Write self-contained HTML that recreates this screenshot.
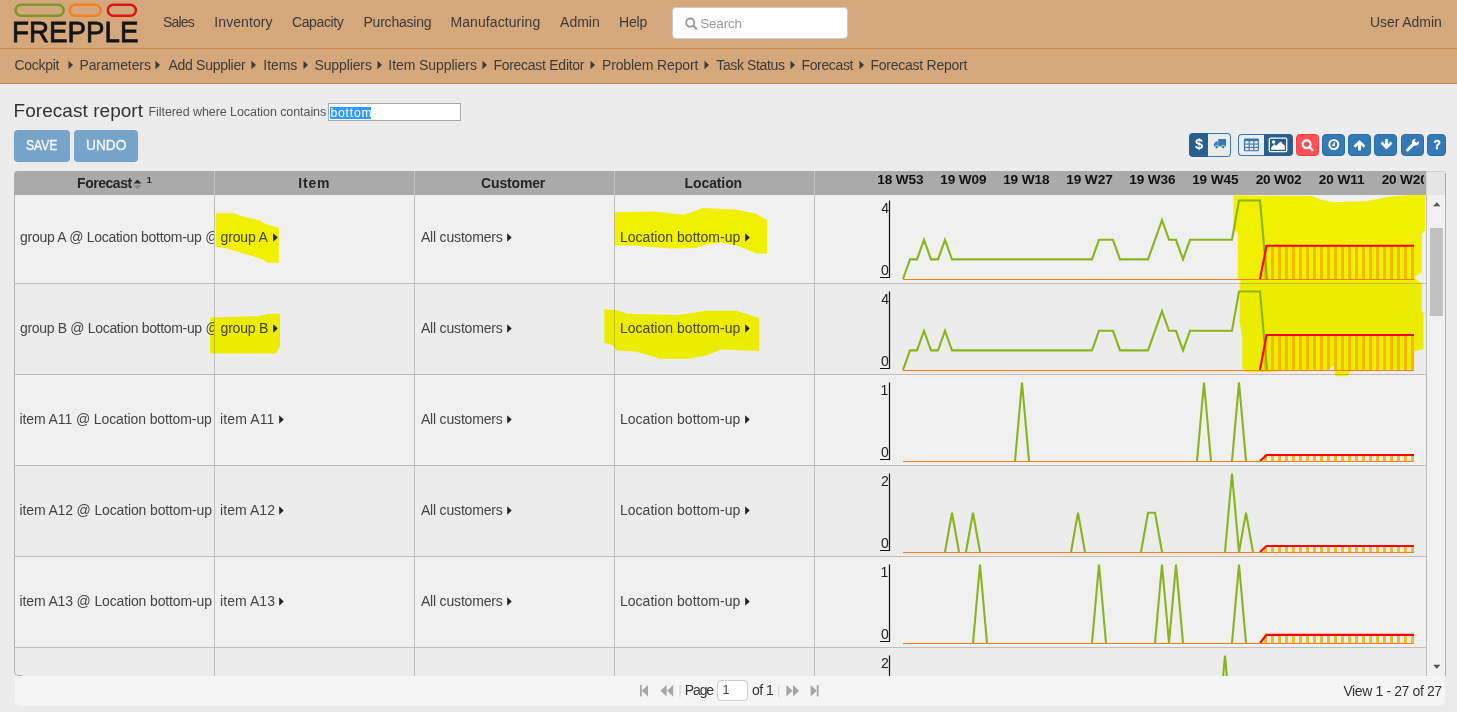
<!DOCTYPE html><html lang="en"><head><meta charset="utf-8"><title>Forecast report - frePPLe</title><style>
*{box-sizing:border-box}
html,body{margin:0;padding:0}
body{width:1457px;height:712px;overflow:hidden;position:relative;background:#ececec;font-family:"Liberation Sans", sans-serif;}
.abs{position:absolute}
.t{position:absolute;white-space:pre;line-height:1;margin:0;padding:0}
#nav{left:0;top:0;width:1457px;height:49px;background:#d5a77d;border-bottom:1px solid #c6864c}
#crumbs{left:0;top:49px;width:1457px;height:35px;background:#d5a77d;border-bottom:1px solid #c6864c}
#search{left:672px;top:7px;width:176px;height:32px;background:#fff;border:1px solid #ccc;border-radius:4px}
#filter{left:328px;top:103px;width:133px;height:18px;background:#fff;border:1px solid #a9a9a9}
#sel{left:330px;top:107px;width:41px;height:12px;background:#3399ff}
.btn{position:absolute;border-radius:4px}
#grid{left:14px;top:171px;width:1432px;height:505px;overflow:hidden;border-radius:4px 4px 0 4px}
#ghead{left:0;top:0;width:1412px;height:24px;background:#aaaaaa}
#gheadr{left:1412px;top:0;width:20px;height:24px;background:#e5e5e5;border-left:1px solid #d4d4d4;border-right:1px solid #a8a8a8;border-top:1px solid #d0d0d0}
#gbody{left:0;top:24px;width:1432px;height:481px;overflow:hidden}
.row{position:absolute;left:0;width:1412px;height:91px;border-bottom:1px solid #bebebe}
.vl{position:absolute;top:0;width:1px;background:#bebebe}
#pager{left:15px;top:676px;width:1430px;height:30px;background:#f5f5f5;border-radius:0 0 6px 6px}
#pin{left:717px;top:680px;width:31px;height:21px;background:#fff;border:1px solid #ccc;border-radius:4px}
#hl{left:0;top:0;mix-blend-mode:multiply;pointer-events:none}
</style></head><body>
<div id="nav" class="abs"></div><div id="crumbs" class="abs"></div>
<svg class="abs" style="left:0;top:0" width="160" height="48" viewBox="0 0 160 48"><rect x="15.55" y="4.7" width="48.05" height="11.1" rx="5.55" fill="none" stroke="#80962a" stroke-width="2.5"/><rect x="69.8" y="4.7" width="30.9" height="11.1" rx="5.55" fill="none" stroke="#f5821f" stroke-width="2.5"/><rect x="107.8" y="4.7" width="28.1" height="11.1" rx="5.55" fill="none" stroke="#dc1512" stroke-width="2.5"/></svg>
<div id="search" class="abs"></div>
<svg class="abs" style="left:684px;top:16px" width="14" height="15" viewBox="0 0 14 15"><circle cx="6.2" cy="6.6" r="4.1" fill="none" stroke="#999" stroke-width="1.9"/><path d="M9.4 9.8 L12.1 12.6" stroke="#999" stroke-width="2.2" stroke-linecap="round"/></svg>
<svg class="abs" style="left:67.5px;top:60.4px" width="6" height="10" viewBox="0 0 6 10"><path d="M0.5 0.8 L5 5 L0.5 9.2Z" fill="#3e3a36"/></svg>
<svg class="abs" style="left:154.5px;top:60.4px" width="6" height="10" viewBox="0 0 6 10"><path d="M0.5 0.8 L5 5 L0.5 9.2Z" fill="#3e3a36"/></svg>
<svg class="abs" style="left:250.5px;top:60.4px" width="6" height="10" viewBox="0 0 6 10"><path d="M0.5 0.8 L5 5 L0.5 9.2Z" fill="#3e3a36"/></svg>
<svg class="abs" style="left:302.5px;top:60.4px" width="6" height="10" viewBox="0 0 6 10"><path d="M0.5 0.8 L5 5 L0.5 9.2Z" fill="#3e3a36"/></svg>
<svg class="abs" style="left:376.5px;top:60.4px" width="6" height="10" viewBox="0 0 6 10"><path d="M0.5 0.8 L5 5 L0.5 9.2Z" fill="#3e3a36"/></svg>
<svg class="abs" style="left:481.5px;top:60.4px" width="6" height="10" viewBox="0 0 6 10"><path d="M0.5 0.8 L5 5 L0.5 9.2Z" fill="#3e3a36"/></svg>
<svg class="abs" style="left:589.5px;top:60.4px" width="6" height="10" viewBox="0 0 6 10"><path d="M0.5 0.8 L5 5 L0.5 9.2Z" fill="#3e3a36"/></svg>
<svg class="abs" style="left:703.5px;top:60.4px" width="6" height="10" viewBox="0 0 6 10"><path d="M0.5 0.8 L5 5 L0.5 9.2Z" fill="#3e3a36"/></svg>
<svg class="abs" style="left:789.5px;top:60.4px" width="6" height="10" viewBox="0 0 6 10"><path d="M0.5 0.8 L5 5 L0.5 9.2Z" fill="#3e3a36"/></svg>
<svg class="abs" style="left:858.5px;top:60.4px" width="6" height="10" viewBox="0 0 6 10"><path d="M0.5 0.8 L5 5 L0.5 9.2Z" fill="#3e3a36"/></svg>
<div id="filter" class="abs"></div><div id="sel" class="abs"></div>
<div class="btn" style="left:14px;top:130px;width:56px;height:32px;background:#76a3c9"></div>
<div class="btn" style="left:74px;top:130px;width:64px;height:32px;background:#76a3c9"></div>
<div id="toolbar">
<div class="abs" style="left:1189px;top:133px;width:19px;height:24px;background:#285f8f;border-radius:4px 0 0 4px"></div>
<div class="abs" style="left:1208px;top:133px;width:23px;height:24px;background:#ececec;border:1px solid #337ab7;border-left:0;border-radius:0 4px 4px 0"></div>
<span class="t" style="left:1195px;top:137.2px;font-size:14.5px;font-weight:700;color:#fff">$</span>
<svg class="abs" style="left:1213px;top:138px" width="14" height="12" viewBox="0 0 14 12"><path d="M5.2 1 H13 V8.4 H5.2Z" fill="#337ab7"/><path d="M4.8 3.6 H2.9 L0.9 5.9 V8.4 H4.8Z" fill="#337ab7"/><circle cx="3.6" cy="9" r="1.7" fill="#337ab7" stroke="#ececec" stroke-width="0.7"/><circle cx="10.2" cy="9" r="1.7" fill="#337ab7" stroke="#ececec" stroke-width="0.7"/></svg>
<div class="abs" style="left:1238px;top:134px;width:27px;height:22px;background:#ececec;border:1px solid #337ab7;border-right:0;border-radius:4px 0 0 4px"></div>
<div class="abs" style="left:1264px;top:134px;width:29px;height:22px;background:#285f8f;border-radius:0 4px 4px 0"></div>
<svg class="abs" style="left:1243px;top:138px" width="17" height="14" viewBox="0 0 17 14"><rect x="0.9" y="0.6" width="15" height="12.6" rx="1.2" fill="#3d78b0"/><g fill="#ececec"><rect x="2.2" y="3.2" width="3.4" height="2.3"/><rect x="6.8" y="3.2" width="3.4" height="2.3"/><rect x="11.4" y="3.2" width="3.4" height="2.3"/><rect x="2.2" y="6.6" width="3.4" height="2.3"/><rect x="6.8" y="6.6" width="3.4" height="2.3"/><rect x="11.4" y="6.6" width="3.4" height="2.3"/><rect x="2.2" y="10" width="3.4" height="2.2"/><rect x="6.8" y="10" width="3.4" height="2.2"/><rect x="11.4" y="10" width="3.4" height="2.2"/></g></svg>
<svg class="abs" style="left:1268px;top:137px" width="20" height="16" viewBox="0 0 20 16"><rect x="1.3" y="1.1" width="17.4" height="13.6" rx="1.2" fill="none" stroke="#fff" stroke-width="1.3"/><circle cx="5.6" cy="5" r="1.7" fill="#fff"/><path d="M3.2 12.8 V10.2 L6.4 7.2 L8 8.8 L12.4 4.4 L16.8 8.8 V12.8Z" fill="#fff"/></svg>
<div class="abs" style="left:1296px;top:134px;width:23px;height:22px;background:#fd5257;border:1px solid #fa3e44;border-radius:4px"></div>
<svg class="abs" style="left:1300px;top:138px" width="16" height="16" viewBox="0 0 16 16"><circle cx="6.6" cy="6.3" r="3.85" fill="none" stroke="#fff" stroke-width="2.3"/><path d="M9.6 9.3 L12.3 12" stroke="#fff" stroke-width="2.2" stroke-linecap="round"/></svg>
<div class="abs" style="left:1322px;top:134px;width:23px;height:22px;background:#337ab7;border:1px solid #2e6da4;border-radius:4px"></div>
<svg class="abs" style="left:1326px;top:138px" width="16" height="16" viewBox="0 0 16 16"><circle cx="7.8" cy="6.5" r="4.45" fill="none" stroke="#fff" stroke-width="2.1"/><path d="M8.3 4.2 V7.3 H6.2" fill="none" stroke="#fff" stroke-width="1.4"/></svg>
<div class="abs" style="left:1348px;top:134px;width:23px;height:22px;background:#337ab7;border:1px solid #2e6da4;border-radius:4px"></div>
<svg class="abs" style="left:1353px;top:138.6px" width="14" height="14" viewBox="0 0 14 14"><path d="M6.5 0.9 L12.4 6.8 L10.5 8.7 L7.9 6.1 V11.4 H5.1 V6.1 L2.5 8.7 L0.6 6.8Z" fill="#fff"/></svg>
<div class="abs" style="left:1374px;top:134px;width:23px;height:22px;background:#337ab7;border:1px solid #2e6da4;border-radius:4px"></div>
<svg class="abs" style="left:1379.5px;top:138.4px" width="14" height="14" viewBox="0 0 14 14"><path d="M6.5 11.4 L12.4 5.5 L10.5 3.6 L7.9 6.2 V0.9 H5.1 V6.2 L2.5 3.6 L0.6 5.5Z" fill="#fff"/></svg>
<div class="abs" style="left:1401px;top:134px;width:23px;height:22px;background:#337ab7;border:1px solid #2e6da4;border-radius:4px"></div>
<svg class="abs" style="left:1405px;top:138px" width="16" height="14" viewBox="0 0 16 14"><path d="M2.6 12 L9 5.6" stroke="#fff" stroke-width="2.9" stroke-linecap="round"/><path d="M13.9 3.3 A3.6 3.6 0 1 1 10.9 0.7 L9.5 2.9 L11.4 4.7 Z" fill="#fff"/></svg>
<div class="abs" style="left:1427px;top:134px;width:19px;height:22px;background:#337ab7;border:1px solid #2e6da4;border-radius:4px"></div>
<span class="t" style="left:1433.5px;top:139.3px;font-size:12px;font-weight:700;color:#fff;-webkit-text-stroke:0.4px #fff">?</span>
</div>

<div id="grid" class="abs"><div id="ghead" class="abs">
<div class="vl" style="left:200px;height:24px;background:#c4c4c4"></div>
<div class="vl" style="left:400px;height:24px;background:#c4c4c4"></div>
<div class="vl" style="left:600px;height:24px;background:#c4c4c4"></div>
<div class="vl" style="left:800px;height:24px;background:#c4c4c4"></div>
</div><div id="gheadr" class="abs"></div><div id="gbody" class="abs">
<div class="row" style="top:-2px;background:#f0f0f0"></div>
<div class="row" style="top:89px;background:#ececec"></div>
<div class="row" style="top:180px;background:#f0f0f0"></div>
<div class="row" style="top:271px;background:#ececec"></div>
<div class="row" style="top:362px;background:#f0f0f0"></div>
<div class="row" style="top:453px;background:#ececec"></div>
<div class="vl" style="left:200px;height:482px"></div>
<div class="vl" style="left:400px;height:482px"></div>
<div class="vl" style="left:600px;height:482px"></div>
<div class="vl" style="left:800px;height:482px"></div>
<div class="abs" style="left:0;top:0;width:8px;height:481px;border-left:1px solid #b4b4b4;border-bottom:1px solid #b4b4b4;border-radius:0 0 0 5px"></div>
<div class="abs" style="left:1412px;top:0;width:20px;height:482px;background:#f1f1f1;border-left:1px solid #c0c0c0;border-right:1px solid #b0b0b0"></div>
<div class="abs" style="left:1416px;top:33px;width:13px;height:88px;background:#c1c1c1"></div>
<svg class="abs" style="left:1418px;top:6px" width="10" height="6" viewBox="0 0 10 6"><path d="M1.2 5.2 L4.8 1.2 L8.4 5.2Z" fill="#505050"/></svg>
<svg class="abs" style="left:1418px;top:469px" width="10" height="6" viewBox="0 0 10 6"><path d="M1.2 0.8 L4.8 4.8 L8.4 0.8Z" fill="#505050"/></svg>
</div></div>
<svg class="abs" style="left:133.3px;top:178.6px" width="9" height="11" viewBox="0 0 9 11"><path d="M0.5 4.6 L4.5 0.6 L8.5 4.6Z" fill="#2b2b2b"/><path d="M0.5 6.2 L4.5 10.2 L8.5 6.2Z" fill="#858585"/></svg>
<svg class="abs" style="left:814px;top:195px" width="613" height="482" viewBox="814 195 613 482">
<path d="M889.5 200.5 V277.5 H880" fill="none" stroke="#111" stroke-width="1.2"/>
<path d="M1264 245.8 h3 V279 h-3ZM1271 245.8 h3 V279 h-3ZM1278 245.8 h3 V279 h-3ZM1285 245.8 h3 V279 h-3ZM1292 245.8 h3 V279 h-3ZM1299 245.8 h3 V279 h-3ZM1306 245.8 h3 V279 h-3ZM1313 245.8 h3 V279 h-3ZM1320 245.8 h3 V279 h-3ZM1327 245.8 h3 V279 h-3ZM1334 245.8 h3 V279 h-3ZM1341 245.8 h3 V279 h-3ZM1348 245.8 h3 V279 h-3ZM1355 245.8 h3 V279 h-3ZM1362 245.8 h3 V279 h-3ZM1369 245.8 h3 V279 h-3ZM1376 245.8 h3 V279 h-3ZM1383 245.8 h3 V279 h-3ZM1390 245.8 h3 V279 h-3ZM1397 245.8 h3 V279 h-3ZM1404 245.8 h3 V279 h-3ZM1411 245.8 h3 V279 h-3Z" fill="#f5b92d"/>
<path d="M903 279.0L910 259.4L917 259.4L924 239.8L931 259.4L938 259.4L945 239.8L952 259.4L959 259.4L966 259.4L973 259.4L980 259.4L987 259.4L994 259.4L1001 259.4L1008 259.4L1015 259.4L1022 259.4L1029 259.4L1036 259.4L1043 259.4L1050 259.4L1057 259.4L1064 259.4L1071 259.4L1078 259.4L1085 259.4L1092 259.4L1099 239.8L1106 239.8L1113 239.8L1120 259.4L1127 259.4L1134 259.4L1141 259.4L1148 259.4L1155 239.8L1162 220.1L1169 239.8L1176 239.8L1183 259.4L1190 239.8L1197 239.8L1204 239.8L1211 239.8L1218 239.8L1225 239.8L1232 239.8L1239 200.5L1246 200.5L1253 200.5L1260 200.5L1267 279.0" fill="none" stroke="#8bb31d" stroke-width="2.1" stroke-linejoin="miter"/>
<polyline points="1260,279 1266.5,245.8 1414,245.8" fill="none" stroke="#ff0000" stroke-width="2.1"/>
<path d="M903 279.5 H1414" stroke="#ff7f0e" stroke-width="1.2" fill="none"/>
<path d="M889.5 291.5 V368.5 H880" fill="none" stroke="#111" stroke-width="1.2"/>
<path d="M1264 335.0 h3 V370 h-3ZM1271 335.0 h3 V370 h-3ZM1278 335.0 h3 V370 h-3ZM1285 335.0 h3 V370 h-3ZM1292 335.0 h3 V370 h-3ZM1299 335.0 h3 V370 h-3ZM1306 335.0 h3 V370 h-3ZM1313 335.0 h3 V370 h-3ZM1320 335.0 h3 V370 h-3ZM1327 335.0 h3 V370 h-3ZM1334 335.0 h3 V370 h-3ZM1341 335.0 h3 V370 h-3ZM1348 335.0 h3 V370 h-3ZM1355 335.0 h3 V370 h-3ZM1362 335.0 h3 V370 h-3ZM1369 335.0 h3 V370 h-3ZM1376 335.0 h3 V370 h-3ZM1383 335.0 h3 V370 h-3ZM1390 335.0 h3 V370 h-3ZM1397 335.0 h3 V370 h-3ZM1404 335.0 h3 V370 h-3ZM1411 335.0 h3 V370 h-3Z" fill="#f5b92d"/>
<path d="M903 370.0L910 350.4L917 350.4L924 330.8L931 350.4L938 350.4L945 330.8L952 350.4L959 350.4L966 350.4L973 350.4L980 350.4L987 350.4L994 350.4L1001 350.4L1008 350.4L1015 350.4L1022 350.4L1029 350.4L1036 350.4L1043 350.4L1050 350.4L1057 350.4L1064 350.4L1071 350.4L1078 350.4L1085 350.4L1092 350.4L1099 330.8L1106 330.8L1113 330.8L1120 350.4L1127 350.4L1134 350.4L1141 350.4L1148 350.4L1155 330.8L1162 311.1L1169 330.8L1176 330.8L1183 350.4L1190 330.8L1197 330.8L1204 330.8L1211 330.8L1218 330.8L1225 330.8L1232 330.8L1239 291.5L1246 291.5L1253 291.5L1260 291.5L1267 370.0" fill="none" stroke="#8bb31d" stroke-width="2.1" stroke-linejoin="miter"/>
<polyline points="1260,370 1266.5,335.0 1414,335.0" fill="none" stroke="#ff0000" stroke-width="2.1"/>
<path d="M903 370.5 H1414" stroke="#ff7f0e" stroke-width="1.2" fill="none"/>
<path d="M889.5 382.5 V459.5 H880" fill="none" stroke="#111" stroke-width="1.2"/>
<path d="M1264 455.0 h3 V461 h-3ZM1271 455.0 h3 V461 h-3ZM1278 455.0 h3 V461 h-3ZM1285 455.0 h3 V461 h-3ZM1292 455.0 h3 V461 h-3ZM1299 455.0 h3 V461 h-3ZM1306 455.0 h3 V461 h-3ZM1313 455.0 h3 V461 h-3ZM1320 455.0 h3 V461 h-3ZM1327 455.0 h3 V461 h-3ZM1334 455.0 h3 V461 h-3ZM1341 455.0 h3 V461 h-3ZM1348 455.0 h3 V461 h-3ZM1355 455.0 h3 V461 h-3ZM1362 455.0 h3 V461 h-3ZM1369 455.0 h3 V461 h-3ZM1376 455.0 h3 V461 h-3ZM1383 455.0 h3 V461 h-3ZM1390 455.0 h3 V461 h-3ZM1397 455.0 h3 V461 h-3ZM1404 455.0 h3 V461 h-3ZM1411 455.0 h3 V461 h-3Z" fill="#f5b92d"/>
<path d="M1015 461.0L1022 382.5L1029 461.0M1197 461.0L1204 382.5L1211 461.0M1232 461.0L1239 382.5L1246 461.0" fill="none" stroke="#8bb31d" stroke-width="2.1" stroke-linejoin="miter"/>
<polyline points="1260,461 1266.5,455.0 1414,455.0" fill="none" stroke="#ff0000" stroke-width="2.1"/>
<path d="M903 461.5 H1414" stroke="#ff7f0e" stroke-width="1.2" fill="none"/>
<path d="M889.5 473.5 V550.5 H880" fill="none" stroke="#111" stroke-width="1.2"/>
<path d="M1264 546.0 h3 V552 h-3ZM1271 546.0 h3 V552 h-3ZM1278 546.0 h3 V552 h-3ZM1285 546.0 h3 V552 h-3ZM1292 546.0 h3 V552 h-3ZM1299 546.0 h3 V552 h-3ZM1306 546.0 h3 V552 h-3ZM1313 546.0 h3 V552 h-3ZM1320 546.0 h3 V552 h-3ZM1327 546.0 h3 V552 h-3ZM1334 546.0 h3 V552 h-3ZM1341 546.0 h3 V552 h-3ZM1348 546.0 h3 V552 h-3ZM1355 546.0 h3 V552 h-3ZM1362 546.0 h3 V552 h-3ZM1369 546.0 h3 V552 h-3ZM1376 546.0 h3 V552 h-3ZM1383 546.0 h3 V552 h-3ZM1390 546.0 h3 V552 h-3ZM1397 546.0 h3 V552 h-3ZM1404 546.0 h3 V552 h-3ZM1411 546.0 h3 V552 h-3Z" fill="#f5b92d"/>
<path d="M945 552.0L952 512.8L959 552.0M966 552.0L973 512.8L980 552.0M1071 552.0L1078 512.8L1085 552.0M1141 552.0L1148 512.8L1155 512.8L1162 552.0M1225 552.0L1232 473.5L1239 552.0L1246 512.8L1253 552.0" fill="none" stroke="#8bb31d" stroke-width="2.1" stroke-linejoin="miter"/>
<polyline points="1260,552 1266.5,546.0 1414,546.0" fill="none" stroke="#ff0000" stroke-width="2.1"/>
<path d="M903 552.5 H1414" stroke="#ff7f0e" stroke-width="1.2" fill="none"/>
<path d="M889.5 564.5 V641.5 H880" fill="none" stroke="#111" stroke-width="1.2"/>
<path d="M1264 634.9 h3 V643 h-3ZM1271 634.9 h3 V643 h-3ZM1278 634.9 h3 V643 h-3ZM1285 634.9 h3 V643 h-3ZM1292 634.9 h3 V643 h-3ZM1299 634.9 h3 V643 h-3ZM1306 634.9 h3 V643 h-3ZM1313 634.9 h3 V643 h-3ZM1320 634.9 h3 V643 h-3ZM1327 634.9 h3 V643 h-3ZM1334 634.9 h3 V643 h-3ZM1341 634.9 h3 V643 h-3ZM1348 634.9 h3 V643 h-3ZM1355 634.9 h3 V643 h-3ZM1362 634.9 h3 V643 h-3ZM1369 634.9 h3 V643 h-3ZM1376 634.9 h3 V643 h-3ZM1383 634.9 h3 V643 h-3ZM1390 634.9 h3 V643 h-3ZM1397 634.9 h3 V643 h-3ZM1404 634.9 h3 V643 h-3ZM1411 634.9 h3 V643 h-3Z" fill="#f5b92d"/>
<path d="M973 643.0L980 564.5L987 643.0M1092 643.0L1099 564.5L1106 643.0M1155 643.0L1162 564.5L1169 643.0L1176 564.5L1183 643.0M1232 643.0L1239 564.5L1246 643.0" fill="none" stroke="#8bb31d" stroke-width="2.1" stroke-linejoin="miter"/>
<polyline points="1260,643 1266.5,634.9 1414,634.9" fill="none" stroke="#ff0000" stroke-width="2.1"/>
<path d="M903 643.5 H1414" stroke="#ff7f0e" stroke-width="1.2" fill="none"/>
<path d="M889.5 655.5 V732.5 H880" fill="none" stroke="#111" stroke-width="1.2"/>
<path d="M1264 728.0 h3 V734 h-3ZM1271 728.0 h3 V734 h-3ZM1278 728.0 h3 V734 h-3ZM1285 728.0 h3 V734 h-3ZM1292 728.0 h3 V734 h-3ZM1299 728.0 h3 V734 h-3ZM1306 728.0 h3 V734 h-3ZM1313 728.0 h3 V734 h-3ZM1320 728.0 h3 V734 h-3ZM1327 728.0 h3 V734 h-3ZM1334 728.0 h3 V734 h-3ZM1341 728.0 h3 V734 h-3ZM1348 728.0 h3 V734 h-3ZM1355 728.0 h3 V734 h-3ZM1362 728.0 h3 V734 h-3ZM1369 728.0 h3 V734 h-3ZM1376 728.0 h3 V734 h-3ZM1383 728.0 h3 V734 h-3ZM1390 728.0 h3 V734 h-3ZM1397 728.0 h3 V734 h-3ZM1404 728.0 h3 V734 h-3ZM1411 728.0 h3 V734 h-3Z" fill="#f5b92d"/>
<path d="M1218 734.0L1225 655.5L1232 734.0" fill="none" stroke="#8bb31d" stroke-width="2.1" stroke-linejoin="miter"/>
<polyline points="1260,734 1266.5,728.0 1414,728.0" fill="none" stroke="#ff0000" stroke-width="2.1"/>
<path d="M903 734.5 H1414" stroke="#ff7f0e" stroke-width="1.2" fill="none"/>
</svg>
<div id="pager" class="abs"></div><div id="pin" class="abs"></div>
<svg class="abs" style="left:636px;top:684px" width="190" height="14" viewBox="0 0 190 14" fill="#a6a6a6">
<rect x="4" y="1" width="1.8" height="11.5"/><path d="M12 1 V12.5 L5.8 6.75Z"/>
<path d="M30.6 1 V12.5 L24.4 6.75Z"/><path d="M37.2 1 V12.5 L31 6.75Z"/>
<rect x="43.5" y="1" width="1" height="12" fill="#d0d0d0"/>
<rect x="142.3" y="1" width="1" height="12" fill="#d0d0d0"/>
<path d="M150.4 1 V12.5 L156.6 6.75Z"/><path d="M157 1 V12.5 L163.2 6.75Z"/>
<path d="M174.6 1 V12.5 L180.8 6.75Z"/><rect x="180.8" y="1" width="1.8" height="11.5"/>
</svg>

<svg class="abs" style="left:272.6px;top:232.9px" width="5" height="9" viewBox="0 0 5 9"><path d="M0.2 0.2 L4.7 4.5 L0.2 8.8Z" fill="#222"/></svg>
<svg class="abs" style="left:507.1px;top:232.9px" width="5" height="9" viewBox="0 0 5 9"><path d="M0.2 0.2 L4.7 4.5 L0.2 8.8Z" fill="#222"/></svg>
<svg class="abs" style="left:745.1px;top:232.9px" width="5" height="9" viewBox="0 0 5 9"><path d="M0.2 0.2 L4.7 4.5 L0.2 8.8Z" fill="#222"/></svg>
<svg class="abs" style="left:272.6px;top:323.9px" width="5" height="9" viewBox="0 0 5 9"><path d="M0.2 0.2 L4.7 4.5 L0.2 8.8Z" fill="#222"/></svg>
<svg class="abs" style="left:507.1px;top:323.9px" width="5" height="9" viewBox="0 0 5 9"><path d="M0.2 0.2 L4.7 4.5 L0.2 8.8Z" fill="#222"/></svg>
<svg class="abs" style="left:745.1px;top:323.9px" width="5" height="9" viewBox="0 0 5 9"><path d="M0.2 0.2 L4.7 4.5 L0.2 8.8Z" fill="#222"/></svg>
<svg class="abs" style="left:278.6px;top:414.9px" width="5" height="9" viewBox="0 0 5 9"><path d="M0.2 0.2 L4.7 4.5 L0.2 8.8Z" fill="#222"/></svg>
<svg class="abs" style="left:507.1px;top:414.9px" width="5" height="9" viewBox="0 0 5 9"><path d="M0.2 0.2 L4.7 4.5 L0.2 8.8Z" fill="#222"/></svg>
<svg class="abs" style="left:745.1px;top:414.9px" width="5" height="9" viewBox="0 0 5 9"><path d="M0.2 0.2 L4.7 4.5 L0.2 8.8Z" fill="#222"/></svg>
<svg class="abs" style="left:279.1px;top:505.9px" width="5" height="9" viewBox="0 0 5 9"><path d="M0.2 0.2 L4.7 4.5 L0.2 8.8Z" fill="#222"/></svg>
<svg class="abs" style="left:507.1px;top:505.9px" width="5" height="9" viewBox="0 0 5 9"><path d="M0.2 0.2 L4.7 4.5 L0.2 8.8Z" fill="#222"/></svg>
<svg class="abs" style="left:745.1px;top:505.9px" width="5" height="9" viewBox="0 0 5 9"><path d="M0.2 0.2 L4.7 4.5 L0.2 8.8Z" fill="#222"/></svg>
<svg class="abs" style="left:279.1px;top:596.9px" width="5" height="9" viewBox="0 0 5 9"><path d="M0.2 0.2 L4.7 4.5 L0.2 8.8Z" fill="#222"/></svg>
<svg class="abs" style="left:507.1px;top:596.9px" width="5" height="9" viewBox="0 0 5 9"><path d="M0.2 0.2 L4.7 4.5 L0.2 8.8Z" fill="#222"/></svg>
<svg class="abs" style="left:745.1px;top:596.9px" width="5" height="9" viewBox="0 0 5 9"><path d="M0.2 0.2 L4.7 4.5 L0.2 8.8Z" fill="#222"/></svg>
<a class="t" style="left:162.96px;top:15.15px;font-size:14px;color:#3e3a36;letter-spacing:-0.798px">Sales</a>
<a class="t" style="left:214.34px;top:15.15px;font-size:14px;color:#3e3a36;letter-spacing:0.071px">Inventory</a>
<a class="t" style="left:291.95px;top:15.15px;font-size:14px;color:#3e3a36;letter-spacing:-0.364px">Capacity</a>
<a class="t" style="left:363.45px;top:15.15px;font-size:14px;color:#3e3a36;letter-spacing:-0.211px">Purchasing</a>
<a class="t" style="left:450.45px;top:15.15px;font-size:14px;color:#3e3a36;letter-spacing:0.085px">Manufacturing</a>
<a class="t" style="left:560.08px;top:15.15px;font-size:14px;color:#3e3a36;letter-spacing:-0.021px">Admin</a>
<a class="t" style="left:618.95px;top:15.15px;font-size:14px;color:#3e3a36;letter-spacing:-0.148px">Help</a>
<span class="t" style="left:700.34px;top:16.66px;font-size:13.4px;color:#999;letter-spacing:-0.174px">Search</span>
<a class="t" style="left:1369.99px;top:15.15px;font-size:14px;color:#3e3a36;letter-spacing:-0.071px">User Admin</a>
<a class="t" style="left:14.45px;top:58.15px;font-size:14px;color:#3e3a36;letter-spacing:-0.281px">Cockpit</a>
<a class="t" style="left:79.45px;top:58.15px;font-size:14px;color:#3e3a36;letter-spacing:-0.099px">Parameters</a>
<a class="t" style="left:168.38px;top:58.15px;font-size:14px;color:#3e3a36;letter-spacing:-0.266px">Add Supplier</a>
<a class="t" style="left:263.34px;top:58.15px;font-size:14px;color:#3e3a36;letter-spacing:-0.07px">Items</a>
<a class="t" style="left:314.46px;top:58.15px;font-size:14px;color:#3e3a36;letter-spacing:-0.112px">Suppliers</a>
<a class="t" style="left:388.34px;top:58.15px;font-size:14px;color:#3e3a36;letter-spacing:-0.069px">Item Suppliers</a>
<a class="t" style="left:493.45px;top:58.15px;font-size:14px;color:#3e3a36;letter-spacing:-0.276px">Forecast Editor</a>
<a class="t" style="left:601.95px;top:58.15px;font-size:14px;color:#3e3a36;letter-spacing:-0.119px">Problem Report</a>
<a class="t" style="left:716.34px;top:58.15px;font-size:14px;color:#3e3a36;letter-spacing:-0.378px">Task Status</a>
<a class="t" style="left:801.45px;top:58.15px;font-size:14px;color:#3e3a36;letter-spacing:-0.354px">Forecast</a>
<a class="t" style="left:870.45px;top:58.15px;font-size:14px;color:#3e3a36;letter-spacing:-0.248px">Forecast Report</a>
<h1 class="t" style="left:13.6px;top:101.42px;font-size:19px;color:#333;letter-spacing:0.042px;font-weight:400">Forecast report</h1>
<span class="t" style="left:148.54px;top:106.42px;font-size:12.5px;color:#555;letter-spacing:-0.073px">Filtered where Location contains</span>
<span class="t" style="left:330.4px;top:106.77px;font-size:12.2px;color:#fff;letter-spacing:0.793px">bottom</span>
<span class="t" style="left:26.43px;top:138.15px;font-size:14px;color:#f4f8fb;letter-spacing:0px;-webkit-text-stroke:0.35px #f4f8fb;transform-origin:0 50%;transform:scaleX(0.8628)">SAVE</span>
<span class="t" style="left:86.02px;top:138.15px;font-size:14px;color:#f4f8fb;letter-spacing:0px;-webkit-text-stroke:0.35px #f4f8fb;transform-origin:0 50%;transform:scaleX(0.9773)">UNDO</span>
<b class="t" style="left:77.11px;top:175.85px;font-size:14px;color:#262626;letter-spacing:-0.479px;font-weight:700">Forecast</b>
<span class="t" style="left:146.7px;top:176.18px;font-size:9px;color:#262626;letter-spacing:0px;font-weight:700">1</span>
<b class="t" style="left:298.36px;top:175.85px;font-size:14px;color:#262626;letter-spacing:0.784px;font-weight:700">Item</b>
<b class="t" style="left:481.07px;top:175.85px;font-size:14px;color:#262626;letter-spacing:-0.157px;font-weight:700">Customer</b>
<b class="t" style="left:684.61px;top:175.85px;font-size:14px;color:#262626;letter-spacing:-0.118px;font-weight:700">Location</b>
<span class="t" style="left:877.15px;top:173.49px;font-size:13.6px;color:#111;letter-spacing:-0.061px;font-weight:700">18 W53</span>
<span class="t" style="left:940.15px;top:173.49px;font-size:13.6px;color:#111;letter-spacing:-0.067px;font-weight:700">19 W09</span>
<span class="t" style="left:1003.15px;top:173.49px;font-size:13.6px;color:#111;letter-spacing:-0.078px;font-weight:700">19 W18</span>
<span class="t" style="left:1066.15px;top:173.49px;font-size:13.6px;color:#111;letter-spacing:-0.056px;font-weight:700">19 W27</span>
<span class="t" style="left:1129.15px;top:173.49px;font-size:13.6px;color:#111;letter-spacing:-0.061px;font-weight:700">19 W36</span>
<span class="t" style="left:1192.15px;top:173.49px;font-size:13.6px;color:#111;letter-spacing:-0.08px;font-weight:700">19 W45</span>
<span class="t" style="left:1255.7px;top:173.49px;font-size:13.6px;color:#111;letter-spacing:-0.173px;font-weight:700">20 W02</span>
<span class="t" style="left:1318.7px;top:173.49px;font-size:13.6px;color:#111;letter-spacing:-0.05px;font-weight:700">20 W11</span>
<span class="t" style="left:1381.7px;top:173.49px;font-size:13.6px;color:#111;letter-spacing:-0.167px;font-weight:700;width:42.2px;padding-bottom:3px;overflow:hidden">20 W20</span>
<span class="t" style="left:15.04px;top:230.15px;font-size:14px;color:#444;letter-spacing:-0.278px;padding-left:5px;padding-bottom:4px;width:199px;overflow:hidden">group A @ Location bottom-up @</span>
<a class="t" style="left:220.54px;top:230.15px;font-size:14px;color:#444;letter-spacing:-0.165px">group A</a>
<a class="t" style="left:420.88px;top:230.15px;font-size:14px;color:#444;letter-spacing:-0.176px">All customers</a>
<a class="t" style="left:619.95px;top:230.15px;font-size:14px;color:#444;letter-spacing:0.033px">Location bottom-up</a>
<span class="t" style="left:15.04px;top:321.15px;font-size:14px;color:#444;letter-spacing:-0.325px;padding-left:5px;padding-bottom:4px;width:199px;overflow:hidden">group B @ Location bottom-up @</span>
<a class="t" style="left:220.54px;top:321.15px;font-size:14px;color:#444;letter-spacing:-0.188px">group B</a>
<a class="t" style="left:420.88px;top:321.15px;font-size:14px;color:#444;letter-spacing:-0.176px">All customers</a>
<a class="t" style="left:619.95px;top:321.15px;font-size:14px;color:#444;letter-spacing:0.033px">Location bottom-up</a>
<span class="t" style="left:19.52px;top:412.15px;font-size:14px;color:#444;letter-spacing:-0.104px">item A11 @ Location bottom-up</span>
<a class="t" style="left:220.02px;top:412.15px;font-size:14px;color:#444;letter-spacing:0.131px">item A11</a>
<a class="t" style="left:420.88px;top:412.15px;font-size:14px;color:#444;letter-spacing:-0.176px">All customers</a>
<a class="t" style="left:619.95px;top:412.15px;font-size:14px;color:#444;letter-spacing:0.033px">Location bottom-up</a>
<span class="t" style="left:19.52px;top:503.15px;font-size:14px;color:#444;letter-spacing:-0.14px">item A12 @ Location bottom-up</span>
<a class="t" style="left:220.02px;top:503.15px;font-size:14px;color:#444;letter-spacing:0.062px">item A12</a>
<a class="t" style="left:420.88px;top:503.15px;font-size:14px;color:#444;letter-spacing:-0.176px">All customers</a>
<a class="t" style="left:619.95px;top:503.15px;font-size:14px;color:#444;letter-spacing:0.033px">Location bottom-up</a>
<span class="t" style="left:19.52px;top:594.15px;font-size:14px;color:#444;letter-spacing:-0.14px">item A13 @ Location bottom-up</span>
<a class="t" style="left:220.02px;top:594.15px;font-size:14px;color:#444;letter-spacing:0.062px">item A13</a>
<a class="t" style="left:420.88px;top:594.15px;font-size:14px;color:#444;letter-spacing:-0.176px">All customers</a>
<a class="t" style="left:619.95px;top:594.15px;font-size:14px;color:#444;letter-spacing:0.033px">Location bottom-up</a>
<span class="t" style="left:684.75px;top:683.05px;font-size:14px;color:#333;letter-spacing:-1.103px">Page</span>
<span class="t" style="left:722.58px;top:684.32px;font-size:12.5px;color:#444;letter-spacing:0px">1</span>
<span class="t" style="left:752.07px;top:683.05px;font-size:14px;color:#333;letter-spacing:-0.545px">of 1</span>
<span class="t" style="left:1343.38px;top:684.15px;font-size:14px;color:#333;letter-spacing:-0.377px">View 1 - 27 of 27</span>
<span class="t" style="left:881.32px;top:201.15px;font-size:14px;color:#222;letter-spacing:0px">4</span>
<span class="t" style="left:881.1px;top:263.15px;font-size:14px;color:#222;letter-spacing:0px">0</span>
<span class="t" style="left:881.32px;top:292.15px;font-size:14px;color:#222;letter-spacing:0px">4</span>
<span class="t" style="left:881.1px;top:354.15px;font-size:14px;color:#222;letter-spacing:0px">0</span>
<span class="t" style="left:880.52px;top:383.15px;font-size:14px;color:#222;letter-spacing:0px">1</span>
<span class="t" style="left:881.1px;top:445.15px;font-size:14px;color:#222;letter-spacing:0px">0</span>
<span class="t" style="left:880.99px;top:474.15px;font-size:14px;color:#222;letter-spacing:0px">2</span>
<span class="t" style="left:881.1px;top:536.15px;font-size:14px;color:#222;letter-spacing:0px">0</span>
<span class="t" style="left:880.52px;top:565.15px;font-size:14px;color:#222;letter-spacing:0px">1</span>
<span class="t" style="left:881.1px;top:627.15px;font-size:14px;color:#222;letter-spacing:0px">0</span>
<span class="t" style="left:880.99px;top:656.15px;font-size:14px;color:#222;letter-spacing:0px">2</span>
<span class="t" style="left:12.39px;top:15.77px;font-size:30.4px;color:#141414;letter-spacing:0px;-webkit-text-stroke:0.8px #141414;transform-origin:0 50%;transform:scaleX(0.9132)">FREPPLE</span>
<svg id="hl" class="abs" width="1457" height="712" viewBox="0 0 1457 712" fill="#ffff00">
<polygon points="215.7,213.2 234.1,213.2 240.4,215.7 259.3,220.3 265.7,224 278.8,227.8 278.8,262.7 266.9,262.7 263.1,259.4 250.5,255.6 237.9,251.8 227.8,248.5 215.7,246.8"/>
<polygon points="210.1,317.5 258.1,316.2 268.2,313.7 280,313.7 280,346.5 275.8,353.6 210.1,353.6"/>
<polygon points="614.7,212.2 653.1,211.4 683.4,214.7 703.6,208.1 736.5,209.7 756.7,214 767.1,220.3 767.1,253.6 756.7,253.6 736.5,245.5 721.3,242.5 706.2,244.3 696.1,248.1 670.8,248.6 632.9,245.5 614.7,245.5"/>
<polygon points="604.3,309.2 615.2,310 627.8,313.7 678.4,315 706.2,310.7 736.5,310.7 759.2,318 759.2,351.1 721.3,349.6 706.2,355.4 688.5,358.7 660.7,358.7 635.4,351.6 616.5,350.4 612.7,345.3 604.3,342.8"/>
<polygon points="1233.5,195.5 1312.2,196 1320.4,199.6 1334.1,202.3 1367,201 1388.9,196.8 1408.1,195 1425.1,195 1425.1,231.1 1421.8,233.8 1421.8,272.2 1414.1,277.7 1421.8,283.2 1421.8,310.5 1423.4,313.3 1423.4,348.9 1414.1,351.6 1414.1,369.5 1378,369.5 1350.5,370.8 1347.8,376.3 1335.5,376.3 1334.1,365.3 1328.6,369.5 1284.8,370.8 1262.9,372.2 1246.4,372.2 1242.3,368.1 1242.3,337.9 1239.6,321.5 1239.6,284.5 1241,281.8 1237.7,277.7 1238,232.5 1233.5,230.5"/>
</svg>

</body></html>
